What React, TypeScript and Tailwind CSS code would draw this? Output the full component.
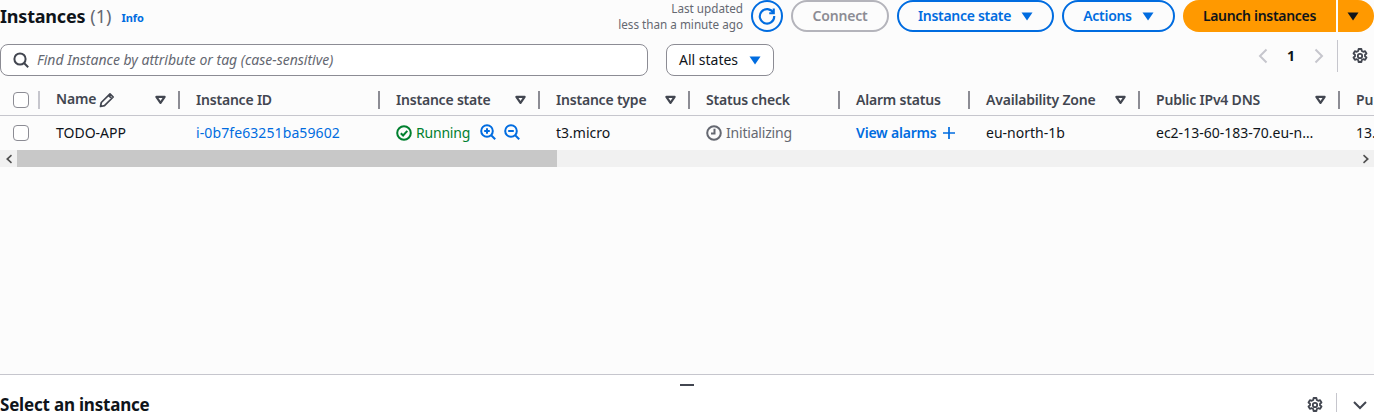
const columns = [
  { label: "Instance ID", width: "w-[200px]", filter: false },
  { label: "Instance state", width: "w-[160px]", filter: true },
  { label: "Instance type", width: "w-[150px]", filter: true },
  { label: "Status check", width: "w-[150px]", filter: false },
  { label: "Alarm status", width: "w-[130px]", filter: false },
  { label: "Availability Zone", width: "w-[170px]", filter: true },
  { label: "Public IPv4 DNS", width: "w-[200px]", filter: true },
];

function Caret({ className }: { className: string }) {
  return (
    <svg viewBox="0 0 12 9" className={className} fill="currentColor">
      <path d="M0.5 0.5h11L6 8.5z" />
    </svg>
  );
}

function FilterCaret() {
  return (
    <svg viewBox="0 0 12 10" className="h-[10px] w-[11px] shrink-0 text-[#424650]" fill="none" stroke="currentColor" strokeWidth="2.4" strokeLinejoin="round">
      <path d="M1.5 1.5h9L6 8.2z" />
    </svg>
  );
}

function Gear({ className }: { className: string }) {
  return (
    <svg viewBox="0 0 16 16" className={className} fill="none" stroke="currentColor" strokeWidth="1.8" strokeLinejoin="round">
      <path d="M6.6 1h2.8l.4 2 1.4.8 1.9-.7 1.4 2.4-1.5 1.3v1.4l1.5 1.3-1.4 2.4-1.9-.7-1.4.8-.4 2H6.6l-.4-2-1.4-.8-1.9.7-1.4-2.4 1.5-1.3V6.8L1.5 5.5l1.4-2.4 1.9.7 1.4-.8z" />
      <circle cx="8" cy="8" r="2.2" />
    </svg>
  );
}

function Checkbox() {
  return <div className="h-4 w-4 rounded-[4px] border border-[#8c8c94] bg-white" />;
}

function Zoom({ plus }: { plus: boolean }) {
  return (
    <svg viewBox="0 0 16 16" className="h-4 w-4 text-[#006ce0]" fill="none" stroke="currentColor" strokeWidth="2">
      <circle cx="7" cy="7" r="5.8" />
      <path d="M11.2 11.2l4 4M4.2 7h5.6" />
      {plus && <path d="M7 4.2v5.6" />}
    </svg>
  );
}

function PillButton({ label, width }: { label: string; width: string }) {
  return (
    <button className={`flex h-8 ${width} items-center justify-center gap-[10px] rounded-full border-2 border-[#006ce0] text-sm font-semibold tracking-[-0.3px] text-[#006ce0]`}>
      {label}
      <Caret className="h-[9px] w-3" />
    </button>
  );
}

export default function App() {
  return (
    <div className="flex h-[412px] w-[1374px] flex-col overflow-hidden bg-white font-['Noto_Sans',sans-serif] text-sm text-[#0f141a]">
      <div className="h-[375px] shrink-0 border-b border-[#c6c6cd] bg-[#fcfcfc]">
        <header className="flex h-8 items-center justify-between">
          <div className="flex items-center">
            <h1 className="text-lg font-bold leading-8 tracking-[-0.2px]">Instances</h1>
            <span className="ml-[5px] text-lg leading-8 text-[#656871]">(1)</span>
            <a className="ml-[10px] mt-[3px] text-[11px] font-bold text-[#006ce0]">Info</a>
          </div>
          <div className="flex items-center">
            <div className="mr-2 text-right text-[11.7px] leading-4 text-[#656871]">
              <div>Last updated</div>
              <div>less than a minute ago</div>
            </div>
            <button className="mr-2 flex h-8 w-8 items-center justify-center rounded-full border-2 border-[#006ce0] text-[#006ce0]">
              <svg viewBox="0 0 16 16" className="h-[18px] w-[18px]" fill="none" stroke="currentColor" strokeWidth="1.9">
                <path d="M13.6 5.2A6.4 6.4 0 1 0 14.4 8" />
                <path d="M10 5.6h4V1.4" />
              </svg>
            </button>
            <button className="mr-2 h-8 w-[98px] rounded-full border-2 border-[#b4b4bb] text-sm font-semibold tracking-[-0.2px] text-[#8c8c94]">Connect</button>
            <div className="mr-2">
              <PillButton label="Instance state" width="w-[157px]" />
            </div>
            <div className="mr-2">
              <PillButton label="Actions" width="w-[113px]" />
            </div>
            <button className="h-8 w-[153px] rounded-l-full bg-[#ff9900] text-sm font-semibold tracking-[-0.3px]">Launch instances</button>
            <button className="ml-[2px] flex h-8 w-[36px] items-center justify-center rounded-r-full bg-[#ff9900]">
              <Caret className="mr-[6px] h-[9px] w-3" />
            </button>
          </div>
        </header>

        <div className="mt-3 flex h-8 items-center">
          <div className="flex h-8 w-[648px] items-center rounded-lg border border-[#8c8c94] bg-white pl-3">
            <svg viewBox="0 0 16 16" className="h-4 w-4 text-[#424650]" fill="none" stroke="currentColor" strokeWidth="2">
              <circle cx="7" cy="7" r="5.6" />
              <path d="M11 11l4.2 4.2" />
            </svg>
            <span className="ml-2 text-sm italic text-[#656871]">Find Instance by attribute or tag (case-sensitive)</span>
          </div>
          <button className="ml-[18px] flex h-8 w-[108px] items-center justify-center gap-[11px] rounded-lg border border-[#8c8c94] bg-white text-sm">
            All states
            <Caret className="h-[9px] w-3 text-[#006ce0]" />
          </button>
          <div className="-mt-2 ml-auto flex items-center text-[#c6c6cd]">
            <svg viewBox="0 0 10 16" className="h-4 w-[10px]" fill="none" stroke="currentColor" strokeWidth="2">
              <path d="M8.5 1.5L2 8l6.5 6.5" />
            </svg>
            <span className="mx-[19px] text-sm font-bold text-[#0f141a]">1</span>
            <svg viewBox="0 0 10 16" className="h-4 w-[10px]" fill="none" stroke="currentColor" strokeWidth="2">
              <path d="M1.5 1.5L8 8l-6.5 6.5" />
            </svg>
            <div className="ml-[13px] h-8 w-px bg-[#c6c6cd]" />
            <Gear className="ml-[14px] mr-[6px] h-4 w-4 text-[#424650]" />
          </div>
        </div>

        <div className="mt-2 flex h-[32px] items-center overflow-hidden border-b border-[#c6c6cd] font-semibold tracking-[-0.2px] text-[#424650]">
          <div className="flex h-[18px] w-10 shrink-0 items-center justify-between pl-[13px]">
            <Checkbox />
            <div className="h-[18px] w-0.5 bg-[#c6c6cd]" />
          </div>
          <div className="flex h-[18px] w-[140px] shrink-0 items-center pl-4">
            <span className="-mt-px">Name</span>
            <svg viewBox="0 0 16 16" className="ml-[3px] h-4 w-4" fill="none" stroke="currentColor" strokeWidth="1.7" strokeLinejoin="round">
              <path d="M1.5 14.5l.8-4L11 1.8l3.2 3.2-8.7 8.7zM9.5 3.3l3.2 3.2" />
            </svg>
            <div className="ml-auto mr-[12px]"><FilterCaret /></div>
            <div className="h-[18px] w-0.5 bg-[#8c8c94]" />
          </div>
          {columns.map((col) => (
            <div key={col.label} className={`flex h-[18px] ${col.width} shrink-0 items-center pl-4`}>
              <span className="whitespace-nowrap">{col.label}</span>
              {col.filter && <div className="ml-auto mr-[12px]"><FilterCaret /></div>}
              <div className={`${col.filter ? "" : "ml-auto"} h-[18px] w-0.5 bg-[#8c8c94]`} />
            </div>
          ))}
          <div className="w-[34px] shrink-0 overflow-hidden whitespace-nowrap pl-4">Pu</div>
        </div>

        <div className="flex h-[34px] items-center overflow-hidden">
          <div className="w-10 shrink-0 pl-[13px]"><Checkbox /></div>
          <div className="w-[140px] shrink-0 pl-4">TODO-APP</div>
          <div className="w-[200px] shrink-0 pl-4 tracking-[0.1px] text-[#006ce0]">i-0b7fe63251ba59602</div>
          <div className="flex w-[160px] shrink-0 items-center pl-4 text-[#00802f]">
            <svg viewBox="0 0 16 16" className="mr-1 h-4 w-4" fill="none" stroke="currentColor" strokeWidth="2">
              <circle cx="8" cy="8" r="6.8" />
              <path d="M4.8 8.2l2.3 2.3 4.2-4.6" />
            </svg>
            <span className="tracking-[-0.2px]">Running</span>
            <div className="ml-[10px] -mt-0.5 flex gap-2">
              <Zoom plus />
              <Zoom plus={false} />
            </div>
          </div>
          <div className="w-[150px] shrink-0 pl-4">t3.micro</div>
          <div className="flex w-[150px] shrink-0 items-center pl-4 text-[#656871]">
            <svg viewBox="0 0 16 16" className="mr-1 h-4 w-4" fill="none" stroke="currentColor" strokeWidth="2">
              <circle cx="8" cy="8" r="6.8" />
              <path d="M8.5 3.8v4.7H5" />
            </svg>
            <span className="tracking-[-0.2px]">Initializing</span>
          </div>
          <div className="flex w-[130px] shrink-0 items-center pl-4 font-semibold tracking-[-0.2px] text-[#006ce0]">
            View alarms
            <svg viewBox="0 0 14 14" className="ml-[6px] h-3 w-3" fill="none" stroke="currentColor" strokeWidth="2">
              <path d="M7 0v14M0 7h14" />
            </svg>
          </div>
          <div className="w-[170px] shrink-0 pl-4">eu-north-1b</div>
          <div className="w-[200px] shrink-0 truncate pl-4 pr-[24px]">ec2-13-60-183-70.eu-north-1.compute.amazonaws.com</div>
          <div className="w-[34px] shrink-0 overflow-hidden whitespace-nowrap pl-4">13.</div>
        </div>

        <div className="flex h-[17px] items-center bg-[#f1f1f1] text-[#505050]">
          <div className="flex w-[17px] justify-center">
            <svg viewBox="0 0 8 10" className="h-[10px] w-2" fill="currentColor"><path d="M6 0.5L1 5l5 4.5 1-1.2L3.6 5 7 1.7z" /></svg>
          </div>
          <div className="h-full w-[540px] bg-[#c8c8c8]" />
          <div className="ml-auto flex w-[17px] justify-center">
            <svg viewBox="0 0 8 10" className="h-[10px] w-2" fill="currentColor"><path d="M2 0.5L7 5 2 9.5 1 8.3 4.4 5 1 1.7z" /></svg>
          </div>
        </div>
      </div>

      <div className="flex justify-center pt-[9px]">
        <div className="h-0.5 w-[14px] bg-[#424650]" />
      </div>
      <div className="mt-[7px] flex h-6 items-center justify-between">
        <h2 className="text-[17px] font-bold leading-6 tracking-[-0.2px]">Select an instance</h2>
        <div className="flex items-center text-[#424650]">
          <Gear className="h-4 w-4" />
          <div className="ml-[13px] h-6 w-px bg-[#c6c6cd]" />
          <svg viewBox="0 0 16 16" className="ml-[15px] mr-[6px] h-4 w-4" fill="none" stroke="currentColor" strokeWidth="2">
            <path d="M2 5l6 6 6-6" />
          </svg>
        </div>
      </div>
    </div>
  );
}
